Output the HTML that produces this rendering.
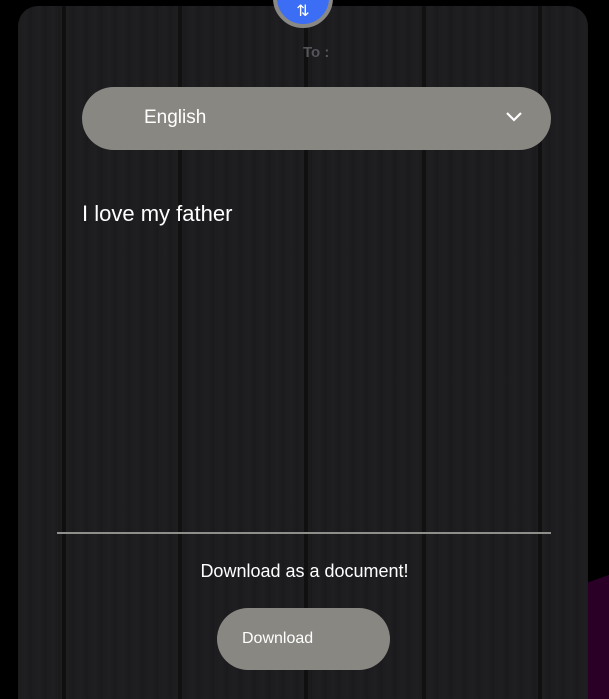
<!DOCTYPE html>
<html><head><style>
html,body{margin:0;width:609px;height:699px;overflow:hidden}
body{background:#000;position:relative;font-family:"Liberation Sans",sans-serif}
.purple{position:absolute;left:588px;top:540px;width:30px;height:159px;background:linear-gradient(160deg,#000 0,#000 25%,#2a0026 25%)}
.card{position:absolute;left:18px;top:6px;width:570px;height:693px;border-radius:20px 20px 0 0;overflow:hidden;
background:
linear-gradient(90deg,transparent 0,transparent 44px,#0f0f10 44px,#0f0f10 48px,transparent 48px,transparent 160px,#111112 160px,#111112 164px,transparent 164px,transparent 286px,#101011 286px,#101011 290px,transparent 290px,transparent 404px,#111112 404px,#111112 408px,transparent 408px,transparent 520px,#101011 520px,#101011 524px,transparent 524px),
repeating-linear-gradient(90deg,#1c1b1e 0,#1f1e21 7px,#1a191c 14px),#1d1c1f}
.swap{position:absolute;left:273px;top:-32px;width:52px;height:52px;border-radius:50%;background:#3b6df5;border:4px solid #8a8884;color:#fff;text-align:center;line-height:80px;font-size:16px}
.to{position:absolute;left:303px;top:44px;color:#55545a;font-size:15px;font-weight:bold}
.sel{position:absolute;left:82px;top:87px;width:469px;height:63px;border-radius:32px;background:#898782;color:#fff;font-size:19px}
.sel span{position:absolute;left:62px;top:20px}
.sel svg{position:absolute;right:28px;top:24px}
.txt{position:absolute;left:82px;top:201px;color:#fff;font-size:22px}
.line{position:absolute;left:57px;top:532px;width:494px;height:2px;background:#8f8e8b}
.dl{position:absolute;left:0;width:609px;top:561px;text-align:center;color:#fff;font-size:18px}
.btn{position:absolute;left:217px;top:608px;width:173px;height:62px;border-radius:31px;background:#898782;color:#fff;font-size:16px}
.btn span{position:absolute;left:25px;top:22px}
</style></head><body>
<div class="purple"></div>
<div class="card"></div>
<div class="swap">⇅</div>
<div class="to">To :</div>
<div class="sel"><span>English</span><svg width="18" height="12" viewBox="0 0 18 12"><path d="M2 2 L9 9 L16 2" stroke="#fff" stroke-width="2.2" fill="none"/></svg></div>
<div class="txt">I love my father</div>
<div class="line"></div>
<div class="dl">Download as a document!</div>
<div class="btn"><span>Download</span></div>
</body></html>
